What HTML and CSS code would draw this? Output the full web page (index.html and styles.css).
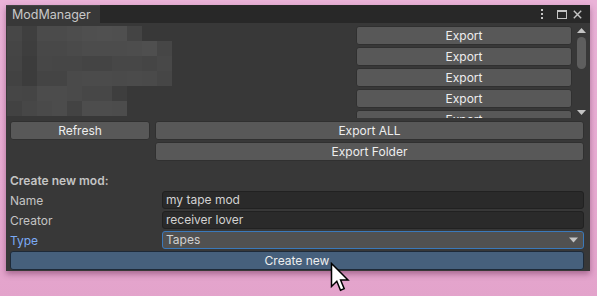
FILE: index.html
```html
<!DOCTYPE html>
<html>
<head>
<meta charset="utf-8">
<link rel="stylesheet" href="styles.css">
</head>
<body>
<div class="window">
  <div class="header">
    <div class="tab">ModManager</div>
    <div class="hicons">
      <svg class="kebab" width="4" height="12" viewBox="0 0 4 12"><rect x="1" y="1" width="2" height="2" fill="#c4c4c4"/><rect x="1" y="5" width="2" height="2" fill="#c4c4c4"/><rect x="1" y="9" width="2" height="2" fill="#c4c4c4"/></svg>
      <svg width="10" height="9" viewBox="0 0 10 9"><rect x="0.5" y="0.5" width="9" height="8" fill="none" stroke="#c4c4c4"/><rect x="0" y="0" width="10" height="2" fill="#c4c4c4"/></svg>
      <svg width="9" height="9" viewBox="0 0 9 9"><path d="M0.8 0.8L8.2 8.2M8.2 0.8L0.8 8.2" stroke="#c4c4c4" stroke-width="1.4"/></svg>
    </div>
  </div>
  <div class="body">
    <div class="scroll">
      <div class="preview">
        <div class="prow">
          <i class="g47"></i><i class="g3f"></i><i class="g4b"></i><i class="g4b"></i><i class="g4d"></i><i class="g4f"></i><i class="g50"></i><i class="g4f"></i><i class="g44"></i>
        </div>
        <div class="prow">
          <i class="g45"></i><i class="g3e"></i><i class="g48"></i><i class="g48"></i><i class="g4a"></i><i class="g4c"></i><i class="g4c"></i><i class="g4c"></i><i class="g4d"></i><i class="g4f"></i><i class="g46"></i>
        </div>
        <div class="prow">
          <i class="g44"></i><i class="g3c"></i><i class="g47"></i><i class="g46"></i><i class="g46"></i><i class="g44"></i><i class="g44"></i><i class="g47"></i><i class="g47"></i><i class="g45"></i><i class="g48"></i>
        </div>
        <div class="prow">
          <i class="g42"></i><i class="g3c"></i><i class="g44"></i><i class="g44"></i><i class="g4a"></i><i class="g4b"></i><i class="g4b"></i><i class="g4a"></i><i class="g4b"></i><i class="g4a"></i><i class="g46"></i>
        </div>
        <div class="prow">
          <i class="g46"></i><i class="g45"></i><i class="g4c"></i><i class="g4c"></i><i class="g4a"></i><i class="g47"></i><i class="g47"></i><i class="g3e"></i>
        </div>
        <div class="prow">
          <i class="g42"></i><i class="g47"></i><i class="g4a"></i><i class="g4c"></i><i class="g43"></i><i class="g4d"></i><i class="g4d"></i><i class="g4c"></i>
        </div>
      </div>
      <div class="exports">
        <div class="btn">Export</div>
        <div class="btn">Export</div>
        <div class="btn">Export</div>
        <div class="btn">Export</div>
        <div class="btn">Export</div>
      </div>
      <div class="vbar">
        <svg class="arrow" width="9" height="5" viewBox="0 0 9 5"><path d="M0 5L4.5 0L9 5Z" fill="#c4c4c4"/></svg>
        <div class="track"><div class="thumb"></div></div>
        <svg class="arrow" width="9" height="5" viewBox="0 0 9 5"><path d="M0 0L4.5 5L9 0Z" fill="#c4c4c4"/></svg>
      </div>
    </div>
    <div class="row1">
      <div class="btn refresh">Refresh</div>
      <div class="btn grow">Export ALL</div>
    </div>
    <div class="row2">
      <div class="btn grow">Export Folder</div>
    </div>
    <div class="section">Create new mod:</div>
    <div class="field">
      <span class="label">Name</span>
      <div class="input">my tape mod</div>
    </div>
    <div class="field">
      <span class="label">Creator</span>
      <div class="input">receiver lover</div>
    </div>
    <div class="field">
      <span class="label focus">Type</span>
      <div class="dropdown">Tapes
        <svg width="9" height="6" viewBox="0 0 9 6"><path d="M0 0.5L4.5 5.5L9 0.5Z" fill="#c4c4c4"/></svg>
      </div>
    </div>
    <div class="btn create">Create new</div>
  </div>
</div>
<svg class="cursor" width="22" height="32" viewBox="0 0 22 32">
  <path d="M1.5 1.5L1.5 24.5L6.8 19.3L10.5 28.2L14.2 26.6L10.6 18H18Z" fill="#fff" stroke="#000" stroke-width="1.5" stroke-linejoin="miter"/>
</svg>
</body>
</html>
```
FILE: styles.css
```css
html, body {
  margin: 0;
  padding: 0;
}
body {
  width: 597px;
  height: 296px;
  overflow: hidden;
  position: relative;
  background: linear-gradient(180deg, #eab3d8 0%, #e8abd2 60%, #e3a3cb 100%);
  font-family: Inter, "Noto Sans", sans-serif;
  font-size: 12px;
  color: #c4c4c4;
}
.window {
  margin: 5px 0 0 6px;
  width: 584px;
  height: 266px;
  background: #383838;
  box-shadow: 0 3px 6px rgba(90, 30, 70, 0.45);
  display: flex;
  flex-direction: column;
}
.header {
  height: 18px;
  background: #282828;
  display: flex;
  align-items: stretch;
}
.tab {
  width: 94px;
  padding-left: 6px;
  background: #383838;
  font-size: 12.5px;
  color: #c8c8c8;
  border-top: 1px solid #444;
  box-sizing: border-box;
  line-height: 17px;
}
.hicons {
  margin-left: auto;
  display: flex;
  align-items: center;
  gap: 6px;
  padding-right: 8px;
}
.kebab { margin-right: 7px; }
.body {
  display: flex;
  flex-direction: column;
  padding: 2px 0 0 0;
}
.scroll {
  display: flex;
  height: 93px;
  overflow: hidden;
}
.preview {
  width: 342px;
  padding: 1px 0 0 1px;
  display: flex;
  flex-direction: column;
}
.prow {
  display: flex;
  height: 15px;
}
.prow i {
  width: 15px;
  height: 15px;
}
.g3c { background: #3c3c3c; }
.g3e { background: #3e3e3e; }
.g3f { background: #3f3f3f; }
.g42 { background: #424242; }
.g43 { background: #434343; }
.g44 { background: #444444; }
.g45 { background: #454545; }
.g46 { background: #464646; }
.g47 { background: #474747; }
.g48 { background: #484848; }
.g4a { background: #4a4a4a; }
.g4b { background: #4b4b4b; }
.g4c { background: #4c4c4c; }
.g4d { background: #4d4d4d; }
.g4f { background: #4f4f4f; }
.g50 { background: #505050; }
.exports {
  width: 216px;
  margin-left: 7px;
  display: flex;
  flex-direction: column;
  gap: 2px;
  padding-top: 1px;
}
.btn {
  box-sizing: border-box;
  height: 19px;
  flex: none;
  background: #585858;
  border: 1px solid #303030;
  border-radius: 3px;
  color: #eeeeee;
  text-align: center;
  line-height: 17px;
  font-size: 12px;
}
.vbar {
  width: 13px;
  margin-left: 3px;
  display: flex;
  flex-direction: column;
  align-items: center;
  padding: 3px 0;
  box-sizing: border-box;
}
.arrow { flex: none; }
.track {
  flex: 1;
  width: 100%;
  padding: 4px 2px;
  box-sizing: border-box;
}
.thumb {
  height: 32px;
  background: #5e5e5e;
  border-radius: 5px;
}
.row1 {
  display: flex;
  gap: 5px;
  margin: 3px 6px 0 4px;
}
.refresh { width: 140px; }
.grow { flex: 1; }
.row2 {
  display: flex;
  margin: 2px 6px 0 149px;
}
.section {
  font-weight: 600;
  margin: 12px 0 0 4px;
  height: 16px;
  line-height: 16px;
  color: #c4c4c4;
}
.field {
  display: flex;
  align-items: center;
  margin: 2px 6px 0 4px;
  height: 18px;
}
.label {
  width: 152px;
  color: #c4c4c4;
}
.label.focus { color: #7babf5; }
.input, .dropdown {
  flex: 1;
  box-sizing: border-box;
  height: 18px;
  background: #2a2a2a;
  border: 1px solid #212121;
  border-radius: 3px;
  color: #d2d2d2;
  padding-left: 3px;
  line-height: 16px;
}
.dropdown {
  background: #515151;
  border-color: #3a79bb;
  display: flex;
  align-items: center;
  justify-content: space-between;
  padding-right: 5px;
}
.create {
  margin: 2px 6px 0 4px;
  background: #46607c;
  border-color: #1e2a38;
}
.cursor {
  position: absolute;
  left: 330px;
  top: 262px;
}
```
